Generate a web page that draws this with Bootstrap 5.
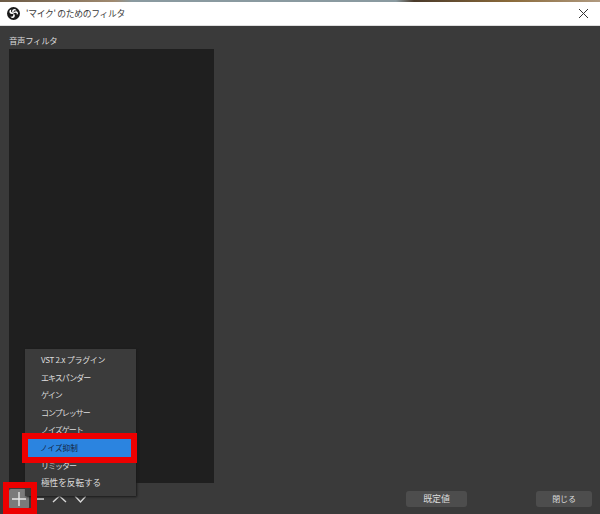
<!DOCTYPE html>
<html lang="ja"><head><meta charset="utf-8">
<link href="https://cdn.jsdelivr.net/npm/bootstrap@5.3.0/dist/css/bootstrap.min.css" rel="stylesheet">
<style>
html,body{height:514px;overflow:hidden;background:#3a3a3a;font-family:"Noto Sans CJK JP","Liberation Sans",sans-serif;font-size:8px;color:#dcdcdc}
.desk-strip{height:2px;background:linear-gradient(90deg,#6b5a45 0,#a08a70 19%,#8a9aa0 22%,#8a9aa0 66%,#4a3a2a 69%,#8a6a3a 85%,#b09a80 100%)}
.title-bar{height:24px;background:#fff;color:#3a3a3a;font-size:8.8px;letter-spacing:-.3px;padding:0 11px 0 7px;border-bottom:1px solid #dedede}
.obs-logo{width:13px;height:13px;margin-right:6px}
.win-close{width:11px;height:11px}
.dlg-body{height:488px;padding:0 8px 0 9px}
.sect-label{height:23px;padding-top:6px;font-size:8.4px;letter-spacing:-.3px;line-height:16px;color:#dcdcdc}
.filter-pane{width:205px;height:434px;background:#1f1f1f}
.dlg-foot{height:31px}
.plus-btn{width:20px;height:20px;background:#7b7b7b;border-radius:2px}
.tool-icons{margin-left:8px}
.ctl-btn{height:16px;background:#4d4d4d;color:#dcdcdc;font-size:9px;border-radius:3px;line-height:16px;text-align:center;letter-spacing:-.2px}
.ctl-default{width:61px}
.ctl-close{width:56px;margin-left:69px;font-size:8px}
.plus-frame{position:absolute;left:3px;top:482px;width:34px;height:32px;border:6px solid #ee0000}
.ctx-menu{position:absolute;left:25px;top:349px;width:111px;height:147px;background:#3b3b3b;box-shadow:1px 1px 2px #1a1a1a;padding-top:2px;font-size:8px;color:#dedede}
.ctx-row{height:17.6px;line-height:17.6px;padding-left:16px;letter-spacing:-.3px}
.ctx-row.kana-tight{letter-spacing:-1px}
.ctx-row.kanji-wide{font-size:8.6px;letter-spacing:0}
.ctx-sel{position:absolute;left:22px;top:433px;width:115px;height:30px;border:6px solid #ee0000;background:#2b84e0;color:#13233a;line-height:17px;font-size:7.6px;padding-left:12px}
</style></head><body>
<div class="desk-strip"></div>
<div class="title-bar d-flex align-items-center">
<svg class="obs-logo" viewBox="0 0 24 24"><circle cx="12" cy="12" r="12" fill="#1a1a1a"/><path d="M12 12C8 9 9 3.500 14 3.500c2.500 0 3.500 2 3 3.500-1-1.500-3.500-1.500-4.500.5-.5 1.200-.5 3-.5 4.500zM12 12c.5-4.500 6-6 8-2 1 2.200-.5 4-2 4.300.7-1.700-.6-3.700-2.800-3.500C13.900 11 13 11.600 12 12zM12 12c4 2 3 8-1.500 8.400-2.400.2-3.800-1.500-3.800-3.100 1.300 1.300 3.700 1 4.500-1 .5-1.300.7-3 .8-4.300zM12 12c-3.500 2.500-8.500 0-7.500-4.500.5-2 2.500-2.800 3.800-2.500C7 6 7 8.500 8.800 9.700 9.800 10.500 11 11.300 12 12z" fill="#fff"/></svg>
<span class="flex-grow-1">'マイク' のためのフィルタ</span>
<svg class="win-close" viewBox="0 0 11 11"><path d="M1 1l9 9M10 1l-9 9" stroke="#333" stroke-width="1" fill="none"/></svg>
</div>
<div class="dlg-body">
<div class="sect-label">音声フィルタ</div>
<div class="filter-pane"></div>
<div class="dlg-foot d-flex align-items-center">
<div class="plus-btn d-flex align-items-center justify-content-center"><svg width="16" height="16" viewBox="0 0 16 16"><path d="M8 1v14M1 8h14" stroke="#e8e8e8" stroke-width="1.4"/></svg></div>
<svg class="tool-icons" width="49" height="12" viewBox="0 0 49 12"><path d="M0 6h7M16 9l6.500-6 6.500 6M38 3l5.500 6 5.500-6" stroke="#d8d8d8" stroke-width="1.400" fill="none"/></svg>
<div class="ctl-btn ctl-default ms-auto">既定値</div>
<div class="ctl-btn ctl-close">閉じる</div>
</div>
</div>
<div class="ctx-menu">
<div class="ctx-row">VST 2.x プラグイン</div>
<div class="ctx-row kana-tight">エキスパンダー</div>
<div class="ctx-row kana-tight">ゲイン</div>
<div class="ctx-row kana-tight">コンプレッサー</div>
<div class="ctx-row kana-tight">ノイズゲート</div>
<div class="ctx-row">&nbsp;</div>
<div class="ctx-row kana-tight">リミッター</div>
<div class="ctx-row kanji-wide">極性を反転する</div>
</div>
<div class="ctx-sel">ノイズ抑制</div>
<div class="plus-frame"></div>
</body></html>
